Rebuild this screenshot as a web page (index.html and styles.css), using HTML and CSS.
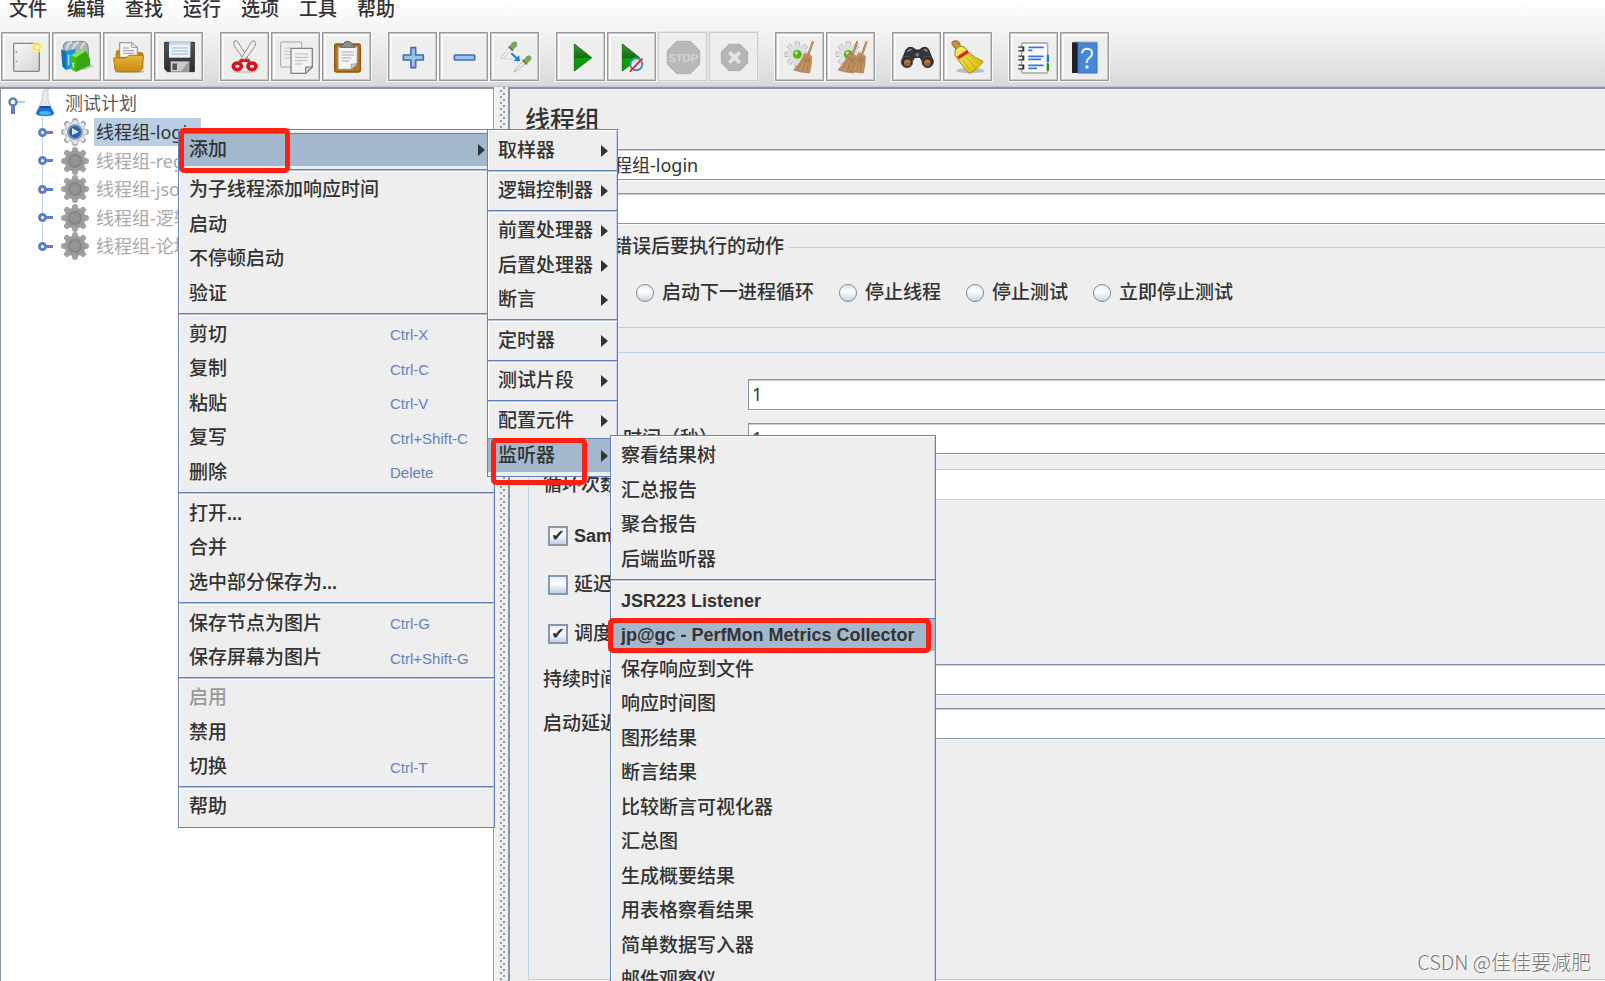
FILE: index.html
```html
<!DOCTYPE html>
<html lang="zh-CN">
<head>
<meta charset="utf-8">
<meta name="viewport" content="width=device-width, initial-scale=1">
<title>线程组</title>
<link rel="stylesheet" href="styles.css">
</head>
<body>
<svg class="defs" aria-hidden="true">
  <defs>
    <linearGradient id="gGreen" x1="0" y1="0" x2="0" y2="1"><stop offset="0" stop-color="#3f9a3c"/><stop offset=".5" stop-color="#136b12"/><stop offset=".55" stop-color="#05a805"/><stop offset="1" stop-color="#0a8f0a"/></linearGradient>
    <linearGradient id="gFolder" x1="0" y1="0" x2="0" y2="1"><stop offset="0" stop-color="#eab63c"/><stop offset="1" stop-color="#c98a10"/></linearGradient>
    <linearGradient id="gPaper" x1="0" y1="0" x2="1" y2="1"><stop offset="0" stop-color="#fafafa"/><stop offset="1" stop-color="#d4d4d4"/></linearGradient>
    <linearGradient id="gYellow" x1="0" y1="0" x2="1" y2="1"><stop offset="0" stop-color="#f8ec70"/><stop offset="1" stop-color="#d8b800"/></linearGradient>
    <linearGradient id="gDark" x1="0" y1="0" x2="0" y2="1"><stop offset="0" stop-color="#555"/><stop offset="1" stop-color="#2b2b2f"/></linearGradient>
    <symbol id="gear" viewBox="0 0 28 28">
      <g stroke-width="6" stroke-linecap="round"><path d="M14 3V25M3 14H25M6 6L22 22M22 6L6 22"/></g>
      <circle cx="14" cy="14" r="10.500" stroke="none"/>
    </symbol>
    <symbol id="cog" viewBox="0 0 80 80">
      <g stroke="#aaa" stroke-width="15"><path d="M40 3V77M3 40H77M14 14L66 66M66 14L14 66"/></g>
      <g stroke="#e2e2e2" stroke-width="11"><path d="M40 5V75M5 40H75M15 15L65 65M65 15L15 65"/></g>
      <circle cx="40" cy="40" r="28" fill="#dedede"/>
      <circle cx="40" cy="40" r="13" fill="#58b41c"/><circle cx="37" cy="36" r="5" fill="#b4ec7c"/>
    </symbol>
    <symbol id="broom" viewBox="0 0 64 100">
      <path d="M60 2L46 42" stroke="#8c6239" stroke-width="6"/><path d="M60 2L46 42" stroke="#d2a679" stroke-width="3"/>
      <path d="M35 38L56 46Q56 72 50 97Q26 96 2 88Q24 66 35 38Z" fill="#c09361" stroke="#a0754a" stroke-width="2"/>
      <path d="M39 46L14 88M44 48L28 93M49 50L40 95M33 55L54 62" stroke="#9a7040" stroke-width="2"/>
    </symbol>
  </defs>
</svg>

<div class="app">
  <header class="header">
    <nav class="menubar" aria-label="主菜单">
      <button type="button">文件</button><button type="button">编辑</button><button type="button">查找</button><button type="button">运行</button><button type="button">选项</button><button type="button">工具</button><button type="button">帮助</button>
    </nav>
    <div class="toolbar" role="toolbar" aria-label="工具栏">
      <div class="tool-group">
        <button type="button" class="tool" aria-label="新建"><svg viewBox="6 6 135 135"><rect x="38" y="34" width="77" height="84" rx="5" fill="url(#gPaper)" stroke="#858585" stroke-width="4"/><path d="M44 60h5M44 88h5" stroke="#888" stroke-width="4"/><circle cx="108" cy="46" r="17" fill="#fff59a" opacity=".65"/><circle cx="108" cy="46" r="9" fill="#fffdd8" stroke="#f3e23a" stroke-width="5"/></svg></button>
        <button type="button" class="tool" aria-label="模板"><svg viewBox="6 6 135 135"><path d="M100 90L126 102L90 116Z" fill="#aaa" opacity=".7"/><path d="M34 46Q34 28 52 30L80 28Q108 26 108 44L110 70L40 66Z" fill="#a9b3b8" stroke="#77858c" stroke-width="3"/><path d="M44 52Q46 34 60 30M62 54Q66 36 80 30M86 50Q90 38 100 32" fill="none" stroke="#dce2e4" stroke-width="6"/><path d="M27 52L42 58V114L31 104Z" fill="#1470b0"/><path d="M42 58L70 50V106L42 114Z" fill="#1695dd"/><path d="M50 68v32" stroke="#a6dcf7" stroke-width="5"/><path d="M56 70L72 76V120L58 112Z" fill="#3cbf11"/><path d="M72 76L102 56L114 80V100L72 120Z" fill="#38a80d"/><path d="M56 70L88 54L102 56L72 76Z" fill="#86e83e"/><path d="M64 92v14" stroke="#d9f8c8" stroke-width="5"/></svg></button>
        <button type="button" class="tool" aria-label="打开"><svg viewBox="6 6 135 135"><ellipse cx="80" cy="119" rx="45" ry="5" fill="#bbb"/><path d="M38 62Q38 54 46 54H60L66 60H114Q121 60 121 68V110H38Z" fill="#bb8619"/><path d="M50 76L50 32H86L103 46V76Z" fill="#f4f4f4" stroke="#8b8b8b" stroke-width="3"/><path d="M86 32V46H103M60 48H78M60 56H93M60 64H93" fill="none" stroke="#999" stroke-width="3"/><path d="M32 78H70L78 70H122L116 112Q114 119 106 119H44Q37 119 36 112Z" fill="url(#gFolder)" stroke="#b67b0d" stroke-width="3"/></svg></button>
        <button type="button" class="tool" aria-label="保存"><svg viewBox="6 6 135 135"><path d="M32 31H121V119H40L32 111Z" fill="url(#gDark)" stroke="#333" stroke-width="3"/><rect x="45" y="31" width="64" height="46" fill="#e9f3fb"/><rect x="45" y="31" width="64" height="7" fill="#c3daec"/><path d="M52 48H102M52 57H102M52 66H102" stroke="#9fb9cc" stroke-width="3"/><path d="M50 88H106V119H50Z" fill="#c9c9c9"/><rect x="54" y="93" width="16" height="22" fill="#555" stroke="#eee" stroke-width="2"/><path d="M80 119L104 90V119Z" fill="#999"/></svg></button>
      </div>
      <div class="tool-group">
        <button type="button" class="tool" aria-label="剪切"><svg viewBox="6 6 135 135"><ellipse cx="74" cy="120" rx="34" ry="4" fill="#ccc"/><path d="M44 27Q38 34 44 44L78 90L86 82L54 30Q49 24 44 27Z" fill="#eee" stroke="#8e8e8e" stroke-width="3"/><path d="M104 27Q110 34 104 44L70 90L62 82L94 30Q99 24 104 27Z" fill="#eee" stroke="#8e8e8e" stroke-width="3"/><path d="M74 84L58 88M74 84L90 88" stroke="#d31c24" stroke-width="10"/><ellipse cx="52" cy="103" rx="12" ry="10" fill="none" stroke="#d5151e" stroke-width="11"/><ellipse cx="96" cy="103" rx="12" ry="10" fill="none" stroke="#d5151e" stroke-width="11"/></svg></button>
        <button type="button" class="tool" aria-label="复制"><svg viewBox="6 6 135 135"><rect x="29" y="30" width="63" height="75" rx="3" fill="#eee" stroke="#a5a5a5" stroke-width="3"/><path d="M40 48H60M40 58H56M40 68H56M40 78H56" stroke="#c4c4c4" stroke-width="3"/><path d="M60 49H124V104L104 124H60Z" fill="#f2f2f2" stroke="#858585" stroke-width="4"/><path d="M104 124V105H124Z" fill="#d2d2d2" stroke="#777" stroke-width="3"/><path d="M72 66H112M72 76H112M72 86H108M72 96H94" stroke="#b9b9b9" stroke-width="3"/></svg></button>
        <button type="button" class="tool" aria-label="粘贴"><svg viewBox="6 6 135 135"><rect x="38" y="36" width="77" height="84" rx="5" fill="#b87518" stroke="#8a560b" stroke-width="4"/><path d="M48 44H106V92L90 112H48Z" fill="#f5f5f5" stroke="#8e8e8e" stroke-width="3"/><path d="M88 112V96H106Z" fill="#ccc" stroke="#888" stroke-width="2"/><path d="M58 60H94M58 69H96M58 78H88M58 87H82" stroke="#aaa" stroke-width="3"/><path d="M54 46Q54 38 64 38Q66 28 76 28Q88 28 90 38Q99 38 99 46Z" fill="#8f918c" stroke="#62645f" stroke-width="3"/></svg></button>
      </div>
      <div class="tool-group">
        <button type="button" class="tool" aria-label="展开"><svg viewBox="6 6 135 135"><path d="M69 47H83V69H106V84H83V107H69V84H46V69H69Z" fill="#9fc3e8" stroke="#416fb0" stroke-width="5" stroke-linejoin="round"/></svg></button>
        <button type="button" class="tool" aria-label="收起"><svg viewBox="6 6 135 135"><rect x="46" y="69" width="61" height="15" rx="2" fill="#9fc3e8" stroke="#416fb0" stroke-width="5"/></svg></button>
        <button type="button" class="tool" aria-label="切换"><svg viewBox="6 6 135 135"><path d="M32 78L58 46L66 53L39 80Z" fill="#f4f4f4" stroke="#c2c2c2" stroke-width="3"/><path d="M56 43L69 56" stroke="#577b48" stroke-width="6"/><path d="M60 43Q66 28 76 29Q83 31 80 42L69 52Z" fill="#76a85b" stroke="#6b9458" stroke-width="2"/><path d="M42 80L68 82" stroke="#ccc" stroke-width="3"/><path d="M64 64L82 81" stroke="#1e7bf2" stroke-width="6"/><path d="M90 88L71 87L87 70Z" fill="#1e7bf2"/><path d="M72 120L78 110L100 87L107 94L84 114Z" fill="#eee" stroke="#b5b5b5" stroke-width="3"/><path d="M98 84L111 97" stroke="#577b48" stroke-width="6"/><path d="M102 85Q108 70 119 71Q126 74 122 83L111 94Z" fill="#76a85b" stroke="#6b9458" stroke-width="2"/></svg></button>
      </div>
      <div class="tool-group">
        <button type="button" class="tool" aria-label="启动"><svg viewBox="6 6 135 135"><path d="M55 36L107 77L55 117Z" fill="url(#gGreen)" stroke="#11780f" stroke-width="3"/></svg></button>
        <button type="button" class="tool" aria-label="不停顿启动"><svg viewBox="6 6 135 135"><path d="M46 36L98 77L46 117Z" fill="url(#gGreen)" stroke="#11780f" stroke-width="3"/><circle cx="88" cy="97" r="18" fill="#eee" fill-opacity=".8" stroke="#4a86c6" stroke-width="6"/><path d="M69 119L106 79" stroke="#e02828" stroke-width="6"/></svg></button>
        <button type="button" class="tool" disabled aria-label="停止"><svg viewBox="6 6 135 135"><path d="M56 28H97L125 56V97L97 125H56L28 97V56Z" fill="#b9b9b9" stroke="#b0b0b0" stroke-width="3"/><text x="76" y="91" text-anchor="middle" class="stop-text">STOP</text></svg></button>
        <button type="button" class="tool" disabled aria-label="关闭"><svg viewBox="6 6 135 135"><path d="M60 37H93L116 60V93L93 116H60L37 93V60Z" fill="#b5b5b5" stroke="#adadad" stroke-width="3"/><path d="M61 61L92 92M92 61L61 92" stroke="#e3e3e3" stroke-width="11"/></svg></button>
      </div>
      <div class="tool-group">
        <button type="button" class="tool" aria-label="清除"><svg viewBox="6 6 135 135"><use href="#cog" x="26" y="26" width="82" height="82"/><use href="#broom" x="54" y="26" width="64" height="100"/></svg></button>
        <button type="button" class="tool" aria-label="清除全部"><svg viewBox="6 6 135 135"><use href="#cog" x="26" y="26" width="82" height="82"/><use href="#broom" x="34" y="26" width="64" height="100"/><use href="#broom" x="62" y="26" width="64" height="100"/></svg></button>
      </div>
      <div class="tool-group">
        <button type="button" class="tool" aria-label="查找"><svg viewBox="6 6 135 135"><path d="M28 88L42 54Q48 42 64 48L72 54H82L90 48Q106 42 110 54L124 88L98 100L84 76H68L54 100Z" fill="#34363a" stroke="#222" stroke-width="3"/><path d="M46 58L58 52M96 52L106 58" stroke="#8f9499" stroke-width="5"/><circle cx="76" cy="68" r="6" fill="#72767a"/><circle cx="45" cy="90" r="17" fill="#2d2d2f" stroke="#555" stroke-width="3"/><circle cx="107" cy="90" r="17" fill="#2d2d2f" stroke="#555" stroke-width="3"/><circle cx="46" cy="92" r="10" fill="#a5602a"/><circle cx="106" cy="92" r="10" fill="#a5602a"/><path d="M38 92Q46 82 54 90M98 92Q106 82 114 90" stroke="#dca06a" stroke-width="3" fill="none"/></svg></button>
        <button type="button" class="tool" aria-label="重置查找"><svg viewBox="6 6 135 135"><ellipse cx="82" cy="116" rx="42" ry="8" fill="#bdbdbd"/><path d="M28 38Q24 28 34 27Q46 24 50 34L54 50L42 56Z" fill="#c98f3d" stroke="#8e5f1c" stroke-width="3"/><path d="M36 58Q44 40 60 44Q72 48 74 60Q96 78 120 88Q106 112 78 124Q56 100 36 70Z" fill="url(#gYellow)" stroke="#a48b10" stroke-width="3"/><path d="M42 74L72 54L78 62L48 82Z" fill="#d42a20"/><path d="M60 84L82 116M70 76L98 108M78 70L110 94" stroke="#b79c0b" stroke-width="2"/></svg></button>
      </div>
      <div class="tool-group">
        <button type="button" class="tool" aria-label="函数助手"><svg viewBox="6 6 135 135"><rect x="38" y="33" width="78" height="90" rx="4" fill="#fcfcfc" stroke="#a4a4a4" stroke-width="4"/><path d="M28 51H46M28 78H46M28 105H46" stroke="#333" stroke-width="15"/><path d="M25 51H40M25 78H40M25 105H40" stroke="#ededed" stroke-width="8"/><path d="M58 46H104M58 55H70M58 73H104M58 82H96M58 100H104M58 109H84" stroke="#2c7ce4" stroke-width="5"/><path d="M113 68H120V90H113Z" fill="#1878e8"/><path d="M113 94H120V116H113Z" fill="#0e9612"/></svg></button>
        <button type="button" class="tool" aria-label="帮助"><svg viewBox="6 6 135 135"><path d="M36 32L44 27H112V32Z" fill="#bdc8d0"/><rect x="36" y="31" width="20" height="92" fill="#1f2227"/><rect x="54" y="33" width="57" height="90" fill="#4687d8" stroke="#3471bc" stroke-width="3"/><path d="M66 64Q67 50 82 50Q97 51 96 65Q95 74 85 80Q80 84 80 93" fill="none" stroke="#eef5ff" stroke-width="6"/><circle cx="81" cy="105" r="5" fill="#eef5ff"/></svg></button>
      </div>
    </div>
  </header>

  <main class="workspace">
    <section class="tree" aria-label="测试计划">
      <div class="tree-row root">
        <svg class="root-handle" viewBox="0 0 20 28"><path d="M12 13H21" stroke="#b8cfe5" stroke-width="2"/><path d="M8 15V25" stroke="#5f80c0" stroke-width="4"/><circle cx="8" cy="13" r="3.500" fill="#fff" stroke="#5f80c0" stroke-width="2.500"/></svg>
        <svg class="flask" viewBox="0 0 20 28"><path d="M8 2L13 0V11L19 24Q19 27 10 27Q1 27 1 24L7 11Z" fill="#e5e9ed" stroke="#c8cdd2"/><path d="M5 17H15L19 24Q19 27 10 27Q1 27 1 24Z" fill="#1a6fd0"/><path d="M5 17L15 17L16 19L4 19Z" fill="#1150a8"/><ellipse cx="10" cy="24" rx="6" ry="2" fill="#45b6f4"/></svg>
        <span>测试计划</span>
      </div>
      <div class="tree-children">
        <div class="tree-row"><i class="handle"></i><svg class="gear"><use href="#gear" fill="#bbb" stroke="#aaa"/><use href="#gear" x="2" y="2" width="24" height="24" fill="#e8e8e8" stroke="#e4e4e4"/><circle cx="14" cy="14" r="7" fill="#2f5fa8" stroke="#7f9bc6" stroke-width="2"/><path d="M11 10L18 14L11 17Z" fill="#dbe8f8"/></svg><span class="tree-label selected">线程组-login</span></div>
        <div class="tree-row off"><i class="handle"></i><svg class="gear"><use href="#gear" fill="#9b9b9b" stroke="#a2a2a2"/><circle cx="14" cy="14" r="6" fill="#949494" stroke="#868686" stroke-width="2"/></svg><span class="tree-label">线程组-register</span></div>
        <div class="tree-row off"><i class="handle"></i><svg class="gear"><use href="#gear" fill="#9b9b9b" stroke="#a2a2a2"/><circle cx="14" cy="14" r="6" fill="#949494" stroke="#868686" stroke-width="2"/></svg><span class="tree-label">线程组-json</span></div>
        <div class="tree-row off"><i class="handle"></i><svg class="gear"><use href="#gear" fill="#9b9b9b" stroke="#a2a2a2"/><circle cx="14" cy="14" r="6" fill="#949494" stroke="#868686" stroke-width="2"/></svg><span class="tree-label">线程组-逻辑</span></div>
        <div class="tree-row off"><i class="handle"></i><svg class="gear"><use href="#gear" fill="#9b9b9b" stroke="#a2a2a2"/><circle cx="14" cy="14" r="6" fill="#949494" stroke="#868686" stroke-width="2"/></svg><span class="tree-label">线程组-论坛</span></div>
      </div>
    </section>
    <div class="divider"></div>
    <section class="editor">
      <h1>线程组</h1>
      <div class="basics">
        <div class="row short"><label for="name">名称：</label><input id="name" type="text" value="线程组-login"></div>
        <div class="row short"><label for="note">注释：</label><input id="note" type="text"></div>
      </div>
      <fieldset class="actions">
        <legend>在取样器错误后要执行的动作</legend>
        <div class="radios">
          <label><input type="radio" name="act" checked>继续</label>
          <label><input type="radio" name="act">启动下一进程循环</label>
          <label><input type="radio" name="act">停止线程</label>
          <label><input type="radio" name="act">停止测试</label>
          <label><input type="radio" name="act">立即停止测试</label>
        </div>
      </fieldset>
      <fieldset class="props">
        <legend>线程属性</legend>
        <div class="rows">
          <div class="row"><label for="threads">线程数：</label><input id="threads" type="text" value="1"></div>
          <div class="row"><label for="ramp"><b>Ramp-Up</b>时间（秒）</label><input id="ramp" type="text" value="1"></div>
          <div class="row loop"><label for="loops">循环次数</label><input id="loops" type="text" disabled></div>
        </div>
        <div class="checks">
          <label><input type="checkbox" checked><b>Same user</b></label>
          <label><input type="checkbox">延迟创建</label>
          <label><input type="checkbox" checked>调度器</label>
        </div>
        <div class="rows">
          <div class="row"><label for="duration">持续时间</label><input id="duration" type="text"></div>
          <div class="row"><label for="delay">启动延迟</label><input id="delay" type="text"></div>
        </div>
      </fieldset>
    </section>
  </main>

  <ul class="menu context" role="menu">
    <li><button type="button" class="active arrow">添加</button></li>
    <li class="sep"></li>
    <li><button type="button">为子线程添加响应时间</button></li>
    <li><button type="button">启动</button></li>
    <li><button type="button">不停顿启动</button></li>
    <li><button type="button">验证</button></li>
    <li class="sep"></li>
    <li><button type="button">剪切<kbd>Ctrl-X</kbd></button></li>
    <li><button type="button">复制<kbd>Ctrl-C</kbd></button></li>
    <li><button type="button">粘贴<kbd>Ctrl-V</kbd></button></li>
    <li><button type="button">复写<kbd>Ctrl+Shift-C</kbd></button></li>
    <li><button type="button">删除<kbd>Delete</kbd></button></li>
    <li class="sep"></li>
    <li><button type="button">打开<b>...</b></button></li>
    <li><button type="button">合并</button></li>
    <li><button type="button">选中部分保存为<b>...</b></button></li>
    <li class="sep"></li>
    <li><button type="button">保存节点为图片<kbd>Ctrl-G</kbd></button></li>
    <li><button type="button">保存屏幕为图片<kbd>Ctrl+Shift-G</kbd></button></li>
    <li class="sep"></li>
    <li><button type="button" disabled>启用</button></li>
    <li><button type="button">禁用</button></li>
    <li><button type="button">切换<kbd>Ctrl-T</kbd></button></li>
    <li class="sep"></li>
    <li><button type="button">帮助</button></li>
  </ul>

  <ul class="menu add" role="menu">
    <li><button type="button" class="arrow">取样器</button></li>
    <li class="sep"></li>
    <li><button type="button" class="arrow">逻辑控制器</button></li>
    <li class="sep"></li>
    <li><button type="button" class="arrow">前置处理器</button></li>
    <li><button type="button" class="arrow">后置处理器</button></li>
    <li><button type="button" class="arrow">断言</button></li>
    <li class="sep"></li>
    <li><button type="button" class="arrow">定时器</button></li>
    <li class="sep"></li>
    <li><button type="button" class="arrow">测试片段</button></li>
    <li class="sep"></li>
    <li><button type="button" class="arrow">配置元件</button></li>
    <li><button type="button" class="active arrow">监听器</button></li>
  </ul>

  <ul class="menu listeners" role="menu">
    <li><button type="button">察看结果树</button></li>
    <li><button type="button">汇总报告</button></li>
    <li><button type="button">聚合报告</button></li>
    <li><button type="button">后端监听器</button></li>
    <li class="sep"></li>
    <li><button type="button"><b>JSR223 Listener</b></button></li>
    <li><button type="button" class="active"><b>jp@gc - PerfMon Metrics Collector</b></button></li>
    <li><button type="button">保存响应到文件</button></li>
    <li><button type="button">响应时间图</button></li>
    <li><button type="button">图形结果</button></li>
    <li><button type="button">断言结果</button></li>
    <li><button type="button">比较断言可视化器</button></li>
    <li><button type="button">汇总图</button></li>
    <li><button type="button">生成概要结果</button></li>
    <li><button type="button">用表格察看结果</button></li>
    <li><button type="button">简单数据写入器</button></li>
    <li><button type="button">邮件观察仪</button></li>
  </ul>

  <div class="mark mark-add"></div>
  <div class="mark mark-listener"></div>
  <div class="mark mark-perfmon"></div>
  <div class="watermark">CSDN @佳佳要减肥</div>
</div>
</body>
</html>
```
FILE: styles.css
```css
:root {
  --steel: #8596a6;
  --blue: #6382bf;
  --pale: #bdd2e8;
  --panel: #eee;
  --ink: #333;
}
* { box-sizing: border-box; }
body {
  margin: 0;
  background: var(--panel);
  color: var(--ink);
  font: 500 19px/20px "Liberation Sans", "Noto Sans CJK SC", sans-serif;
}
button, input { font: inherit; color: inherit; }
button { border: 0; padding: 0; background: none; }
b { font-size: 18px; font-weight: 700; }
.defs { position: absolute; width: 0; height: 0; }

.app {
  position: relative;
  display: flex;
  flex-direction: column;
  height: 100vh;
  overflow: hidden;
}

/* Menu bar and toolbar */
.header {
  background: linear-gradient(#fff, #f0f0f0 45%, #d9d9d9);
  border-bottom: 1px solid #c4c4c4;
  padding-bottom: 5px;
}
.menubar { display: flex; gap: 20px; padding: 0 9px 12px; }
.menubar button { height: 20px; line-height: 18px; }
.toolbar { display: flex; gap: 17px; padding-left: 1px; }
.tool-group { display: flex; gap: 2px; }
.tool {
  width: 49px;
  height: 49px;
  background: #eee;
  border: 1px solid #999;
  outline: 1px solid #f8f8f8;
  box-shadow: inset 0 0 0 1px #c9c9c9, inset 2px 2px 0 1px #fafafa;
}
.tool svg { display: block; width: 45px; height: 45px; margin: 0 auto; }
.tool:disabled { border-color: #ccc; box-shadow: none; outline-color: #e6e6e6; }
.stop-text { font: 700 33px "Liberation Sans", sans-serif; fill: #d4d4d4; }

.workspace { flex: 1; display: flex; min-height: 0; }

/* Tree */
.tree {
  width: 494px;
  flex: none;
  background: #fff;
  border: 1px solid var(--steel);
  border-top-width: 2px;
  border-bottom: 0;
  font: 400 18px/28px "Noto Sans", "Noto Sans CJK SC", sans-serif;
}
.tree-row { display: flex; align-items: center; height: 28px; }
.tree-children .tree-row:nth-child(even) { height: 29px; }
.root { padding-left: 4px; }
.root-handle { width: 20px; height: 28px; margin-right: 10px; }
.flask { width: 20px; height: 28px; margin-right: 10px; }
.root span { opacity: .8; }
.tree-children {
  padding-top: 1px;
  background: linear-gradient(var(--pale), var(--pale)) 41px 0 / 1px 130px no-repeat;
}
.tree-children .tree-row { padding-left: 37px; }
.handle {
  width: 9px;
  height: 9px;
  border: 3px solid #5f80c0;
  border-radius: 50%;
  background: #fff;
  position: relative;
}
.handle::after {
  content: "";
  position: absolute;
  left: 5px;
  top: 0;
  width: 7px;
  height: 3px;
  background: #5f80c0;
}
.gear { width: 28px; height: 28px; margin: 0 5px 0 14px; }
.tree-label { padding: 0 3px 0 2px; white-space: nowrap; }
.tree-label.selected { background: #b8cfe5; }
.off .tree-label { color: #aaa; }

.divider {
  width: 14px;
  flex: none;
  border-left: 1px solid #fff;
  background:
    radial-gradient(circle at 1px 1px, #8d9cab 1px, transparent 1px) 5px 3px / 20px 6px repeat-y,
    radial-gradient(circle at 1px 1px, #8d9cab 1px, transparent 1px) 8px 0 / 20px 6px repeat-y,
    var(--panel);
}

/* Editor */
.editor {
  flex: 1;
  min-width: 0;
  display: flex;
  flex-direction: column;
  border: solid var(--steel);
  border-width: 2px 0 0 2px;
}
.editor h1 { margin: 0; padding: 16px 15px 14px; font-size: 25px; line-height: 30px; font-weight: 500; }
.basics { display: grid; gap: 13px; padding-left: 18px; }
.row { display: grid; grid-template-columns: 205px 1fr; align-items: center; }
.row.short { grid-template-columns: 64px 1fr; }
.row label { white-space: nowrap; }
.row input {
  width: 100%;
  min-width: 0;
  height: 31px;
  border: 1px solid var(--steel);
  border-right: 0;
  border-radius: 0;
  background: #fff;
  padding: 0 3px 2px;
  box-shadow: inset 0 1px #c5ced6, 0 1px #fafafa;
  font: 400 18px "Noto Sans", "Noto Sans CJK SC", sans-serif;
}
.row input:disabled { border-color: var(--pale); box-shadow: none; }
fieldset {
  min-width: 0;
  margin: 13px 0 0 18px;
  padding: 0 0 0 14px;
  border: 1px solid var(--pale);
  border-right: 0;
}
legend { height: 20px; margin-left: -10px; padding: 0 4px; }
.radios { display: flex; gap: 25px; padding: 26px 0 24px 4px; white-space: nowrap; }
.radios label, .checks label { display: flex; align-items: center; gap: 8px; height: 20px; }
input[type=radio], input[type=checkbox] { appearance: none; margin: 0; flex: none; border: 1px solid #7a8a99; }
input[type=radio] {
  width: 18px;
  height: 18px;
  border-radius: 50%;
  background: linear-gradient(#e4edf6, #fff 40%, #c4d6e8);
}
input[type=checkbox] {
  width: 20px;
  height: 20px;
  border-width: 2px;
  border-color: #8798a8;
  background: linear-gradient(#e4edf6, #fff 40%, #bfd2e6);
  display: grid;
  place-items: center;
}
input[type=checkbox]:checked::after { content: "✔"; font: 16px/16px "DejaVu Sans", sans-serif; }
.props { flex: 1; margin-top: 14px; margin-bottom: 1px; }
.props legend + .rows { padding-top: 17px; }
.rows { display: grid; gap: 13px; }
.loop { margin-top: 2px; }
.checks { display: grid; gap: 29px; padding: 26px 0 20px 5px; }
.checks label { gap: 6px; white-space: nowrap; }

/* Popup menus */
.menu {
  position: absolute;
  margin: 0;
  padding: 3px 0;
  list-style: none;
  background: var(--panel);
  border: 1px solid var(--blue);
  box-shadow: inset 1px 1px #fff, inset -1px 0 #c3cfe6;
}
.menu li { height: 34px; }
.menu li:nth-child(even),
.add li:nth-child(8n+1) { height: 35px; }
.menu button {
  display: flex;
  align-items: center;
  position: relative;
  width: 100%;
  height: 100%;
  padding: 0 10px;
  text-align: left;
  white-space: nowrap;
}
.menu button:disabled { color: #999; }
.menu button.active { background: #a3b8cc; box-shadow: inset 0 1px var(--blue), inset 0 -1px #e8edf2; }
.menu li.sep,
.menu li.sep:nth-child(even) {
  height: 6px;
  border-top: 2px solid transparent;
  background: linear-gradient(var(--blue) 1px, #b3c2df 1px, #b3c2df 2px, #fff 2px, #fff 3px, transparent 3px) padding-box;
}
.menu kbd {
  position: absolute;
  left: 211px;
  color: var(--blue);
  font: 400 15px "Liberation Sans", sans-serif;
}
.arrow::after {
  content: "";
  margin-left: auto;
  border-left: 7px solid var(--ink);
  border-top: 6px solid transparent;
  border-bottom: 6px solid transparent;
}
.context { left: 178px; top: 129px; width: 317px; }
.menu .arrow { padding-right: 9px; }
.add { left: 487px; top: 129px; width: 131px; }
.listeners { left: 610px; top: 435px; width: 326px; }

/* Highlight frames */
.mark { position: absolute; border: 5px solid #ff2010; border-radius: 5px; pointer-events: none; }
.mark-add { left: 179px; top: 128px; width: 111px; height: 45px; }
.mark-listener { left: 491px; top: 438px; width: 96px; height: 47px; }
.mark-perfmon { left: 608px; top: 618px; width: 323px; height: 35px; }

.watermark {
  position: absolute;
  right: 14px;
  bottom: 9px;
  font: 300 20px/20px "Noto Sans CJK SC", sans-serif;
  color: #777;
  text-shadow: -1px -1px #fff;
}
```
